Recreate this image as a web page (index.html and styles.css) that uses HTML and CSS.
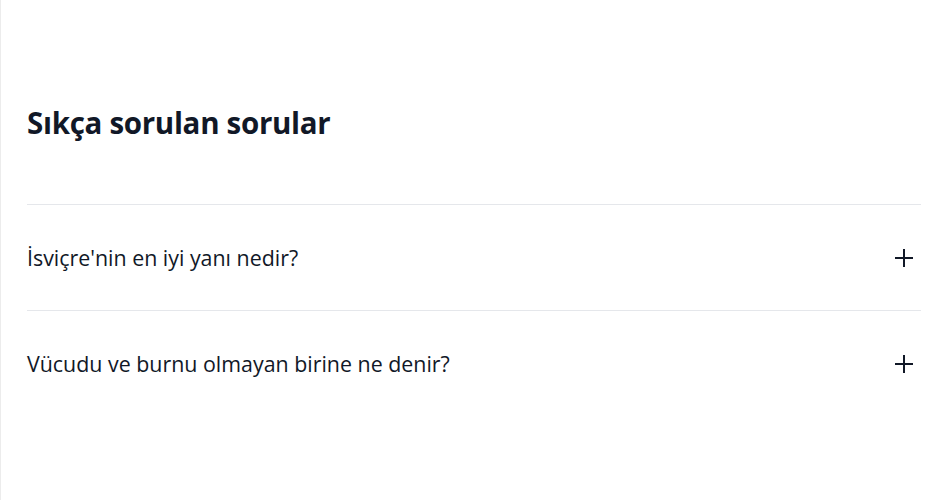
FILE: index.html
```html
<!DOCTYPE html>
<html lang="tr">
<head>
<meta charset="utf-8">
<title>SSS</title>
<link rel="stylesheet" href="styles.css">
</head>
<body>
<main class="page">
  <section class="faq">
    <h2 class="faq-title">Sıkça sorulan sorular</h2>
    <div class="faq-list">
      <div class="faq-item">
        <span class="faq-q">İsviçre'nin en iyi yanı nedir?</span>
        <svg class="faq-icon" viewBox="0 0 24 24" width="24" height="24" aria-hidden="true"><path d="M12 3v18M3 12h18" stroke="currentColor" stroke-width="2" fill="none"/></svg>
      </div>
      <div class="faq-item">
        <span class="faq-q">Vücudu ve burnu olmayan birine ne denir?</span>
        <svg class="faq-icon" viewBox="0 0 24 24" width="24" height="24" aria-hidden="true"><path d="M12 3v18M3 12h18" stroke="currentColor" stroke-width="2" fill="none"/></svg>
      </div>
    </div>
  </section>
</main>
</body>
</html>
```
FILE: styles.css
```css
html, body {
  margin: 0;
  padding: 0;
  background: #fff;
}
body {
  font-family: "Open Sans", "Noto Sans", sans-serif;
  color: #111827;
}
.page {
  min-height: 500px;
  border-left: 1px solid #ececec;
  box-sizing: border-box;
  padding: 100px 26px 0 26px;
}
.faq-title {
  margin: 0 0 58px 0;
  font-size: 29.5px;
  line-height: 46px;
  font-weight: 700;
  letter-spacing: -0.3px;
}
.faq-list {
  border-top: 1px solid #e5e7eb;
}
.faq-item {
  display: flex;
  align-items: center;
  justify-content: space-between;
  height: 105px;
  border-bottom: 1px solid #e5e7eb;
}
.faq-item:last-child {
  border-bottom: none;
}
.faq-q {
  font-size: 21.4px;
  line-height: 28px;
  font-weight: 500;
}
.faq-icon {
  width: 24px;
  height: 24px;
  margin-right: 5px;
  color: #111827;
}
```
